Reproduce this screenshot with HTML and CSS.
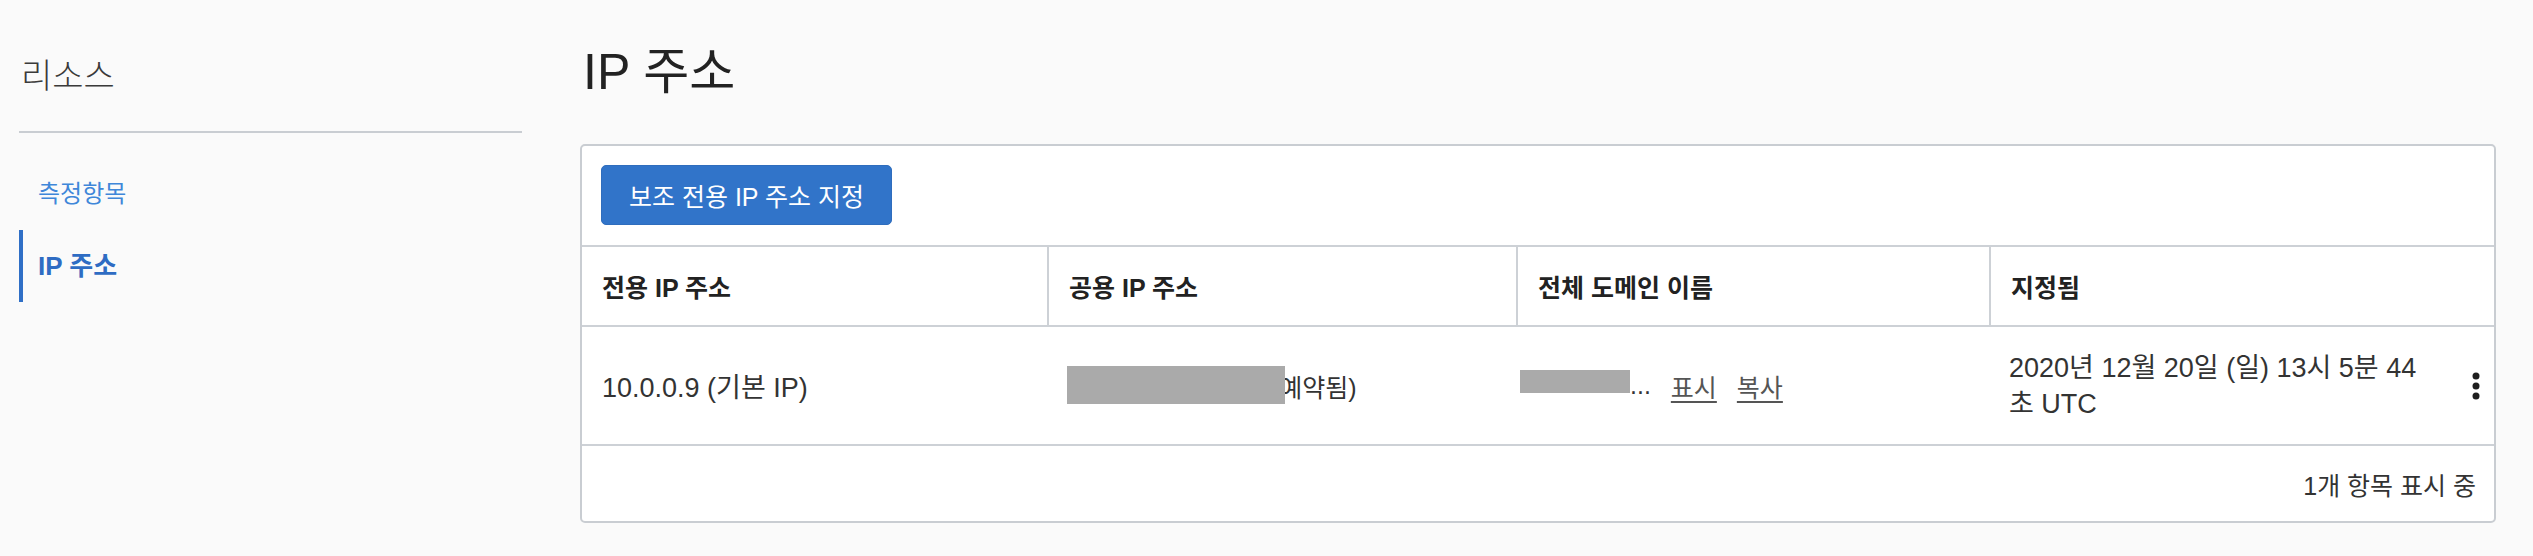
FILE: index.html
```html
<!DOCTYPE html>
<html lang="ko">
<head>
<meta charset="utf-8">
<title>IP 주소</title>
<link rel="stylesheet" href="styles.css">
</head>
<body>
<div class="page">
  <aside class="sidebar">
    <h2 class="side-title">리소스</h2>
    <nav class="side-nav">
      <a class="side-link" href="#">측정항목</a>
      <a class="side-link active" href="#">IP 주소</a>
    </nav>
  </aside>
  <main class="main">
    <h1 class="page-title">IP 주소</h1>
    <section class="card">
      <div class="toolbar">
        <button class="btn-primary" type="button">보조 전용 IP 주소 지정</button>
      </div>
      <div class="grid">
        <div class="th">전용 IP 주소</div>
        <div class="th">공용 IP 주소</div>
        <div class="th">전체 도메인 이름</div>
        <div class="th">지정됨</div>

        <div class="td td-wide">10.0.0.9 (기본 IP)</div>
        <div class="td"><span class="redact redact-ip"></span><span>(예약됨)</span></div>
        <div class="td"><span class="redact redact-dom"></span><span>...</span><a class="link" href="#">표시</a><a class="link" href="#">복사</a></div>
        <div class="td td-wide td-last">
          <span class="date">2020년 12월 20일 (일) 13시 5분 44초 UTC</span>
          <svg class="kebab" width="8" height="28" viewBox="0 0 8 28" aria-hidden="true">
            <circle cx="4" cy="4" r="3.5" fill="#1f1f1f"/>
            <circle cx="4" cy="14" r="3.5" fill="#1f1f1f"/>
            <circle cx="4" cy="24" r="3.5" fill="#1f1f1f"/>
          </svg>
        </div>
      </div>
      <div class="footer">1개 항목 표시 중</div>
    </section>
  </main>
</div>
</body>
</html>
```
FILE: styles.css
```css
* { box-sizing: border-box; }

body {
  margin: 0;
  background: #fafafa;
  font-family: "Liberation Sans", "Noto Sans CJK KR", sans-serif;
  color: #222;
}

.page {
  display: flex;
  padding-left: 19px;
  padding-right: 37px;
}

.sidebar {
  width: 503px;
  flex: none;
}

.side-title {
  margin: 0;
  padding: 52px 0 31px 2px;
  font-size: 34px;
  line-height: 48px;
  font-weight: 200;
  color: #3a3a3a;
  border-bottom: 2px solid #c9cdd2;
}

.side-nav {
  margin-top: 25px;
  display: flex;
  flex-direction: column;
}

.side-link {
  display: block;
  height: 72px;
  line-height: 72px;
  padding-left: 15px;
  border-left: 4px solid transparent;
  font-size: 24px;
  color: #3f87d9;
  text-decoration: none;
}

.side-link.active {
  border-left-color: #2f6fc6;
  color: #2e6cc3;
  font-size: 26px;
  font-weight: 700;
}

.main {
  flex: 1;
  margin-left: 58px;
}

.page-title {
  margin: 0 0 42px;
  padding: 42px 0 0 3px;
  font-size: 50px;
  line-height: 60px;
  font-weight: 400;
  color: #222;
}

.card {
  background: #fff;
  border: 2px solid #c9cdd2;
  border-radius: 5px;
}

.toolbar {
  padding: 19px 19px 20px;
  border-bottom: 2px solid #cdd1d6;
}

.btn-primary {
  height: 60px;
  padding: 0 27px;
  background: #3174c9;
  border: 1px solid #2f6dbd;
  border-radius: 5px;
  color: #fff;
  font-family: inherit;
  font-size: 25px;
}

.grid {
  display: grid;
  grid-template-columns: 465px 469px 473px 1fr;
}

.th {
  height: 80px;
  display: flex;
  align-items: center;
  padding: 0 20px;
  font-size: 25px;
  font-weight: 700;
  color: #222;
  border-bottom: 2px solid #cdd1d6;
}

.th + .th {
  border-left: 2px solid #cdd1d6;
}

.td {
  height: 119px;
  display: flex;
  align-items: center;
  padding: 0 20px;
  font-size: 25px;
  color: #333;
  border-bottom: 2px solid #cdd1d6;
}

.td-wide {
  font-size: 27px;
}

.td-last {
  justify-content: space-between;
  padding-right: 14px;
}

.date {
  width: 418px;
  line-height: 36px;
  word-break: break-all;
}

.kebab {
  display: block;
  flex: none;
}

.redact {
  position: relative;
  flex: none;
}

.redact::before {
  content: "";
  position: absolute;
  background: #aaaaaa;
}

.redact-ip {
  width: 204px;
  height: 38px;
}

.redact-ip::before {
  left: 0;
  top: -1px;
  width: 218px;
  height: 38px;
}

.redact-dom {
  width: 94px;
  height: 23px;
}

.redact-dom::before {
  left: -16px;
  top: -4px;
  width: 110px;
  height: 23px;
}

.link {
  margin-left: 20px;
  color: #555;
  text-decoration: underline;
  text-underline-offset: 4px;
}

.footer {
  height: 75px;
  display: flex;
  justify-content: flex-end;
  align-items: center;
  padding-right: 18px;
  font-size: 25px;
  color: #333;
}
```
